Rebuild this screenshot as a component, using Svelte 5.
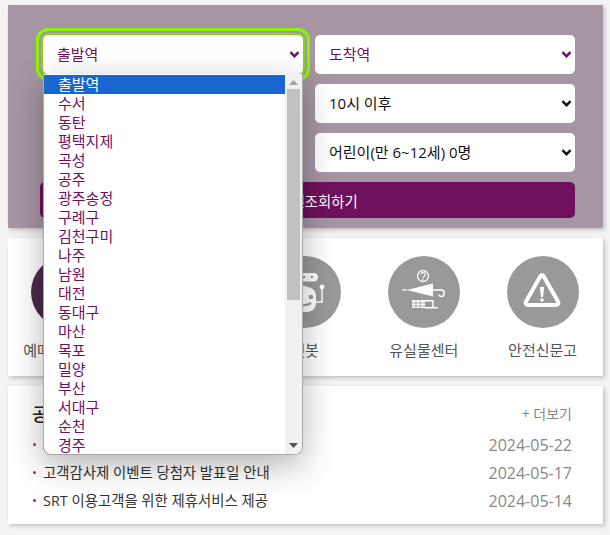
<script>
	const stations = ["출발역", "수서", "동탄", "평택지제", "곡성", "공주", "광주송정", "구례구", "김천구미", "나주", "남원", "대전", "동대구", "마산", "목포", "밀양", "부산", "서대구", "순천", "경주"];

	const notices = [
		{ title: "2024년 6월 열차승차권 예매 일정변경 안내", date: "2024-05-22" },
		{ title: "고객감사제 이벤트 당첨자 발표일 안내", date: "2024-05-17" },
		{ title: "SRT 이용고객을 위한 제휴서비스 제공", date: "2024-05-14" },
	];
</script>

{#snippet chevron(color)}
	<svg class="chevron" width="11" height="7" viewBox="0 0 11 7">
		<path d="M1.400 1.200 5.500 5.200 9.600 1.200" fill="none" stroke={color} stroke-width="2.400" />
	</svg>
{/snippet}

<main>
	<section class="search">
		<div class="fields">
			<div class="field open">
				<select class="purple">
					<option>출발역</option>
				</select>
				{@render chevron("#70115e")}

				<!-- opened option list of the departure select -->
				<div class="popup">
					<ul>
						{#each stations as name, i}
							<li class:selected={i === 0}>{name}</li>
						{/each}
					</ul>
					<div class="scrollbar">
						<svg width="9" height="5" viewBox="0 0 9 5"><path d="M4.500 0 9 5H0z" fill="#a3a3a3" /></svg>
						<div class="track"><div class="thumb"></div></div>
						<svg width="9" height="5" viewBox="0 0 9 5"><path d="M0 0h9L4.500 5z" fill="#505050" /></svg>
					</div>
				</div>
			</div>
			<div class="field">
				<select class="purple">
					<option>도착역</option>
				</select>
				{@render chevron("#70115e")}
			</div>
			<div class="field">
				<select>
					<option>2024-05-28</option>
				</select>
				{@render chevron("#111")}
			</div>
			<div class="field">
				<select>
					<option>10시 이후</option>
				</select>
				{@render chevron("#111")}
			</div>
			<div class="field">
				<select>
					<option>어른(만 13세 이상) 1명</option>
				</select>
				{@render chevron("#111")}
			</div>
			<div class="field">
				<select>
					<option>어린이(만 6~12세) 0명</option>
				</select>
				{@render chevron("#111")}
			</div>
		</div>
		<button>열차편조회하기</button>
	</section>

	<section class="card menu">
		<a href="#ticket">
			<span class="circle dark"></span>
			<span>예매확인/취소</span>
		</a>
		<a href="#info">
			<span class="circle"></span>
			<span>운행정보</span>
		</a>
		<a href="#bot">
			<span class="circle">
				<svg width="72" height="72" viewBox="0 0 72 72">
					<rect x="21" y="17" width="28" height="8.500" rx="4.200" fill="#fff" />
					<circle cx="35" cy="21" r="1.300" fill="#999" />
					<circle cx="43" cy="21" r="1.300" fill="#999" />
					<path d="M24 32c3-3 10-4 14-1 5 0 9 4 9 9v7c0 5-4 9-9 9H25c-6 0-11-5-11-12 0-6 4-11 10-12z" fill="#fff" />
					<circle cx="42" cy="41" r="2.300" fill="#999" />
					<circle cx="28" cy="41" r="2.300" fill="#999" />
					<path d="M27 47c4 3 11 3 15 0" fill="none" stroke="#999" stroke-width="2.200" />
					<circle cx="53" cy="31" r="2.400" fill="#fff" />
					<path d="M53 32v14h-6" fill="none" stroke="#fff" stroke-width="1.500" />
				</svg>
			</span>
			<span>챗봇</span>
		</a>
		<a href="#lost">
			<span class="circle">
				<svg width="72" height="72" viewBox="0 0 72 72">
					<circle cx="35" cy="20" r="5.500" fill="none" stroke="#fff" stroke-width="1.300" />
					<path d="M32.800 18.600c.3-2.800 4.600-2.800 4.600 0 0 1.800-2.400 1.900-2.400 3.400" fill="none" stroke="#fff" stroke-width="1.200" />
					<circle cx="35" cy="23.800" r=".8" fill="#fff" />
					<path d="M14 34h5" stroke="#fff" stroke-width="1.200" />
					<path d="M19 34 45 27.500v13z" fill="#fff" />
					<path d="M45 34h8.500c3.500 0 3.500 6.500 0 6.500-1.500 0-2.300-.8-2.500-2" fill="none" stroke="#fff" stroke-width="1.500" />
					<rect x="24" y="44" width="13" height="8" fill="#fff" />
					<path d="M28 44v8M32 44v8M24 47h13M24 50h13" stroke="#999" stroke-width=".8" />
					<path d="M37 44.700h8v7M37 51.800h13" fill="none" stroke="#fff" stroke-width="1.400" />
				</svg>
			</span>
			<span>유실물센터</span>
		</a>
		<a href="#safety">
			<span class="circle">
				<svg width="72" height="72" viewBox="0 0 72 72">
					<path d="M36.800 20.500 51 45.500c1 1.900-.1 3.500-2 3.500H21c-1.900 0-3-1.600-2-3.500L33.200 20.500c.8-1.600 2.800-1.600 3.600 0z" fill="none" stroke="#fff" stroke-width="4" stroke-linejoin="round" />
					<path d="M32.800 31h4.400L36 41h-2z" fill="#fff" />
					<circle cx="35" cy="44" r="1.800" fill="#fff" />
				</svg>
			</span>
			<span>안전신문고</span>
		</a>
	</section>

	<section class="card board">
		<header>
			<h2>공지사항</h2>
			<a href="#more">+ 더보기</a>
		</header>
		<ul>
			{#each notices as notice}
				<li>
					<span class="title">{notice.title}</span>
					<span class="date">{notice.date}</span>
				</li>
			{/each}
		</ul>
	</section>
</main>

<style>
	:global(body) {
		background: #f3f3f3;
		font-family: "Open Sans", "Noto Sans CJK KR", sans-serif;
	}

	main {
		display: flex;
		flex-direction: column;
		gap: 10px;
		padding: 5px 7px 11px 8px;
	}

	.search {
		background: #a695a3;
		padding: 30px 28px 10px 32px;
		box-shadow: 2px 2px 4px rgba(0, 0, 0, 0.2);
	}

	.fields {
		display: grid;
		grid-template-columns: 260px 260px;
		gap: 10px 12px;
		margin-left: 3px;
	}

	.field {
		position: relative;
		height: 39px;
	}

	select {
		appearance: none;
		display: block;
		width: 100%;
		height: 100%;
		padding: 0 14px 1px;
		border: 0;
		border-radius: 5px;
		background: #fff;
		color: #111;
		font: inherit;
		font-size: 15px;
	}

	select.purple {
		color: #70115e;
	}

	.chevron {
		position: absolute;
		top: 16px;
		right: 3px;
		pointer-events: none;
	}

	.open select {
		box-shadow: 0 0 0 2px #86d51a;
		outline: 3px solid #8cf500;
		outline-offset: 4px;
	}

	.popup {
		position: absolute;
		top: 100%;
		left: 0;
		z-index: 2;
		display: flex;
		width: 260px;
		height: 381px;
		box-sizing: border-box;
		background: #fff;
		border: 1px solid #a8a8a8;
		border-top: 0;
		border-radius: 0 0 8px 8px;
		box-shadow: 0 10px 32px rgba(0, 0, 0, 0.3);
		overflow: hidden;
		color: #70115e;
		font-size: 15px;
	}

	.popup ul {
		flex: 1;
		margin: 0;
		padding: 1px 0 0;
		list-style: none;
	}

	.popup li {
		height: 19px;
		padding-left: 14px;
		line-height: 18px;
	}

	.popup li.selected {
		background: #1a66d0;
		color: #fff;
	}

	.scrollbar {
		display: flex;
		flex-direction: column;
		align-items: center;
		justify-content: space-between;
		width: 17px;
		padding: 6px 0 6px;
		box-sizing: border-box;
		background: #f1f1f1;
	}

	.track {
		flex: 1;
		width: 100%;
		padding: 4px 2px;
		box-sizing: border-box;
	}

	.thumb {
		height: 211px;
		background: #c1c1c1;
	}

	.search button {
		display: block;
		width: 100%;
		height: 36px;
		margin-top: 10px;
		padding: 0 0 0 8px;
		border: 0;
		border-radius: 5px;
		background: #70115e;
		color: #fff;
		font: inherit;
		font-size: 14.400px;
	}

	.card {
		background: #fff;
		box-shadow: 2px 2px 4px rgba(0, 0, 0, 0.2);
	}

	.menu {
		display: grid;
		grid-template-columns: repeat(5, 1fr);
		height: 138px;
		padding-right: 1px;
	}

	.menu a {
		display: flex;
		flex-direction: column;
		align-items: center;
		padding-top: 18px;
		color: #555;
		font-size: 15px;
		text-decoration: none;
		white-space: nowrap;
	}

	.circle {
		display: block;
		width: 72px;
		height: 72px;
		margin-bottom: 11px;
		border-radius: 50%;
		background: #999;
	}

	.circle.dark {
		background: #4b2a49;
	}

	.board {
		height: 138px;
		box-sizing: border-box;
		padding: 14px 31px 0 24px;
	}

	.board header {
		display: flex;
		justify-content: space-between;
		align-items: center;
	}

	.board h2 {
		margin: 0;
		color: #222;
		font-size: 18px;
		font-weight: 500;
	}

	.board header a {
		color: #888;
		font-size: 14px;
		text-decoration: none;
	}

	.board ul {
		margin: 5px 0 0;
		padding: 0;
		list-style: none;
	}

	.board li {
		display: flex;
		justify-content: space-between;
		align-items: center;
		height: 28px;
	}

	.title {
		position: relative;
		margin-bottom: 4px;
		padding-left: 11px;
		color: #333;
		font-size: 14.400px;
	}

	.title::before {
		content: "";
		position: absolute;
		left: 1px;
		top: 10px;
		width: 3px;
		height: 3px;
		border-radius: 50%;
		background: #c0168c;
	}

	.date {
		color: #888;
		font-size: 16px;
	}
</style>
